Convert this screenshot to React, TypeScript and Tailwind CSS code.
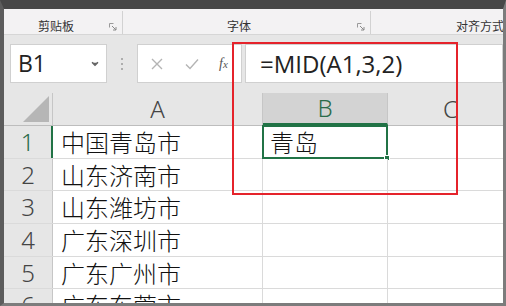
import { ChevronDown } from 'lucide-react';

const cjk = "font-['Noto_Sans_CJK_SC','Noto_Sans',sans-serif]";

interface Row {
  n: number;
  a: string;
  b: string;
  h: string;
}

const rows: Row[] = [
  { n: 1, a: '中国青岛市', b: '青岛', h: 'h-[33px]' },
  { n: 2, a: '山东济南市', b: '', h: 'h-[32px]' },
  { n: 3, a: '山东潍坊市', b: '', h: 'h-[33px]' },
  { n: 4, a: '广东深圳市', b: '', h: 'h-[33px]' },
  { n: 5, a: '广东广州市', b: '', h: 'h-[32px]' },
  { n: 6, a: '广东东莞市', b: '', h: 'h-[33px]' },
];

function Launcher() {
  return (
    <svg width="8" height="8" viewBox="0 0 8 8" className="mt-[2px] shrink-0">
      <path d="M0.5 0.5h4M0.5 0.5v4" stroke="#9a9a9a" strokeWidth="1" fill="none" />
      <path d="M3 3l4 4M7 4v3H4" stroke="#8a8a8a" strokeWidth="1" fill="none" />
    </svg>
  );
}

function Ribbon() {
  return (
    <div className={`flex h-[26px] shrink-0 bg-[#f3f2f3] border-b border-[#d6d6d6] pt-[2px] text-[12px] text-[#333] ${cjk}`}>
      <div className="flex w-[119px] items-center border-r border-[#d2d2d2] pt-[6px] pl-[34px] pr-[5px]">
        <span className="flex-1">剪贴板</span>
        <Launcher />
      </div>
      <div className="flex w-[248px] items-center border-r border-[#d2d2d2] pt-[6px] pl-[104px] pr-[5px]">
        <span className="flex-1">字体</span>
        <Launcher />
      </div>
      <div className="flex flex-1 items-center pt-[6px] pl-[85px] whitespace-nowrap overflow-hidden">
        <span>对齐方式</span>
      </div>
    </div>
  );
}

function FormulaBar() {
  return (
    <div className="flex h-[58px] shrink-0 items-start bg-[#e6e6e6] pt-[9px] pl-[6px]">
      <div className="flex h-[39px] w-[97px] items-center justify-between border border-[#d0d0d0] bg-white pl-[7px] pr-[6px]">
        <span className="font-['Open_Sans',sans-serif] text-[23px] text-[#222] leading-none">B1</span>
        <ChevronDown size={10} strokeWidth={4} className="text-[#666]" fill="#666" />
      </div>
      <div className="flex h-[39px] w-[30px] flex-col items-center justify-center gap-[3px]">
        <span className="h-[2px] w-[2px] rounded-full bg-[#9a9a9a]" />
        <span className="h-[2px] w-[2px] rounded-full bg-[#9a9a9a]" />
        <span className="h-[2px] w-[2px] rounded-full bg-[#9a9a9a]" />
      </div>
      <div className="flex h-[39px] w-[105px] items-center border border-[#d0d0d0] bg-white pl-[13px]">
        <svg width="12" height="12" viewBox="0 0 12 12">
          <path d="M1 1l10 10M11 1L1 11" stroke="#b4b4b4" strokeWidth="1.4" />
        </svg>
        <svg width="14" height="12" viewBox="0 0 14 12" className="ml-[22px]">
          <path d="M1 6.5l4 4L13 1.5" stroke="#b4b4b4" strokeWidth="1.4" fill="none" />
        </svg>
        <span className="ml-[20px] font-['Liberation_Serif',serif] text-[14px] italic text-[#555]">
          f<span className="text-[11px]">x</span>
        </span>
      </div>
      <div className="ml-[3px] flex h-[39px] flex-1 items-center border border-[#d0d0d0] bg-white pl-[14px]">
        <span className="font-['Open_Sans',sans-serif] text-[24px] text-[#222] leading-none">
          =MID(A1,3,2)
        </span>
      </div>
    </div>
  );
}

function ColumnHeaders() {
  return (
    <div className="flex h-[33px] shrink-0 bg-[#e6e6e6] border-b border-[#bdbdbd] text-[24px] font-light leading-none font-['Noto_Sans',sans-serif]">
      <div className="relative w-[49px] shrink-0 border-r border-[#c6c6c6]">
        <svg width="26" height="26" viewBox="0 0 26 26" className="absolute right-[3px] bottom-[3px]">
          <path d="M26 0V26H0Z" fill="#b6b6b6" />
        </svg>
      </div>
      <div className="flex w-[210px] shrink-0 items-center justify-center border-r border-[#c6c6c6] text-[#444]">A</div>
      <div className="flex w-[125px] shrink-0 items-center justify-center border-r border-[#c6c6c6] border-b-2 border-b-[#217346] bg-[#d3d3d3] text-[#2b6b4a]">
        B
      </div>
      <div className="flex w-[125px] shrink-0 items-center justify-center text-[#444]">C</div>
    </div>
  );
}

function Grid() {
  return (
    <div className="flex flex-col">
      {rows.map((r) => (
        <div key={r.n} className={`flex shrink-0 ${r.h} border-b border-[#dadada]`}>
          <div
            className={`flex w-[49px] shrink-0 items-center justify-center bg-[#e6e6e6] border-r text-[24px] font-light leading-none font-['Noto_Sans',sans-serif] ${
              r.n === 1 ? 'border-r-2 border-r-[#217346] bg-[#d3d3d3] text-[#2b6b4a]' : 'border-r-[#c6c6c6] text-[#444]'
            }`}
          >
            {r.n}
          </div>
          <div className={`flex w-[210px] shrink-0 items-center border-r border-[#dadada] bg-white pl-[8px] text-[24px] font-light text-[#111] leading-none ${cjk}`}>
            {r.a}
          </div>
          <div className={`relative flex w-[125px] shrink-0 items-center border-r border-[#dadada] bg-white pl-[7px] text-[24px] font-light text-[#111] leading-none ${cjk}`}>
            {r.b}
            {r.n === 1 && (
              <>
                <div className="absolute -left-px -top-px -right-px -bottom-px border-2 border-[#217346]" />
                <div className="absolute -right-[3px] -bottom-[3px] h-[6px] w-[6px] border border-white bg-[#217346]" />
              </>
            )}
          </div>
          <div className="flex-1 bg-white" />
        </div>
      ))}
    </div>
  );
}

export default function App() {
  return (
    <div className="h-[306px] w-[506px] border-t-[9px] border-l-4 border-r-[3px] border-b-[3px] border-t-[#474747] border-l-[#5c5c5c] border-r-[#7c7c7c] border-b-[#7c7c7c] bg-white">
      <div className="relative flex h-full w-full flex-col overflow-hidden">
        <Ribbon />
        <FormulaBar />
        <ColumnHeaders />
        <Grid />
        {/* red highlight box */}
        <div className="pointer-events-none absolute left-[228px] top-[33px] h-[153px] w-[226px] border-2 border-[#e5232b]" />
      </div>
    </div>
  );
}
